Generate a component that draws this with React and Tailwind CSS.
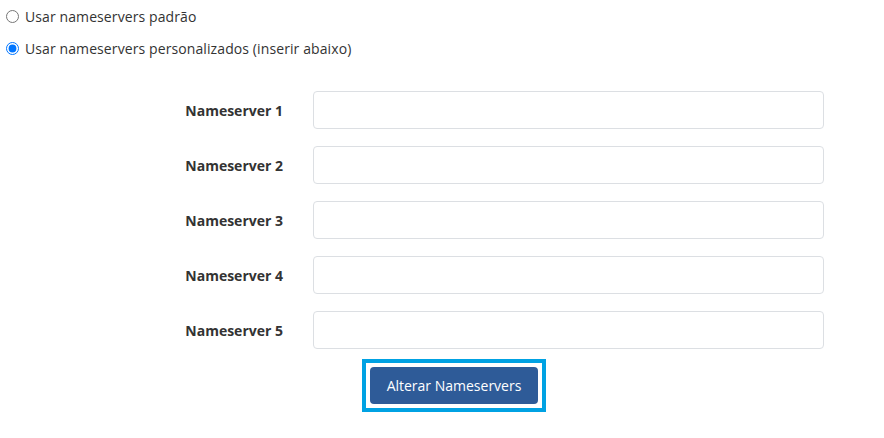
import { useState } from "react"

const App = () => {
  const [mode, setMode] = useState("custom")
  const fields = [1, 2, 3, 4, 5]

  return (
    <div className="w-[884px] h-[438px] bg-white text-[#333] font-['Open_Sans',sans-serif] text-[14px]">
      <div className="pt-[6px] pl-[6px]">
        <label className="flex items-center h-[20px] gap-[6px]">
          <input
            type="radio"
            name="ns"
            checked={mode === "default"}
            onChange={() => setMode("default")}
            className="w-[13px] h-[13px] m-0"
          />
          <span className="tracking-[0.1px]">Usar nameservers padrão</span>
        </label>
        <label className="flex items-center h-[20px] gap-[6px] mt-[12px]">
          <input
            type="radio"
            name="ns"
            checked={mode === "custom"}
            onChange={() => setMode("custom")}
            className="w-[13px] h-[13px] m-0"
          />
          <span className="tracking-[0.1px]">Usar nameservers personalizados (inserir abaixo)</span>
        </label>
      </div>

      <div className="mt-[33px] flex flex-col gap-[17px]">
        {fields.map((n) => (
          <div key={n} className="flex items-center">
            <label className="w-[283px] text-right font-bold text-[14px]">Nameserver {n}</label>
            <input
              type="text"
              className="ml-[30px] w-[511px] h-[38px] border border-[#dcdfe3] rounded-[4px] px-3 outline-none"
            />
          </div>
        ))}
      </div>

      <div className="flex mt-[10px] pl-[362px]">
        <div className="border-[4px] border-[#00a2e3] p-[4px]">
          <button className="bg-[#2e5b98] text-white text-[14px] rounded-[4px] w-[168px] h-[37px]">
            Alterar Nameservers
          </button>
        </div>
      </div>
    </div>
  )
}

export default App
